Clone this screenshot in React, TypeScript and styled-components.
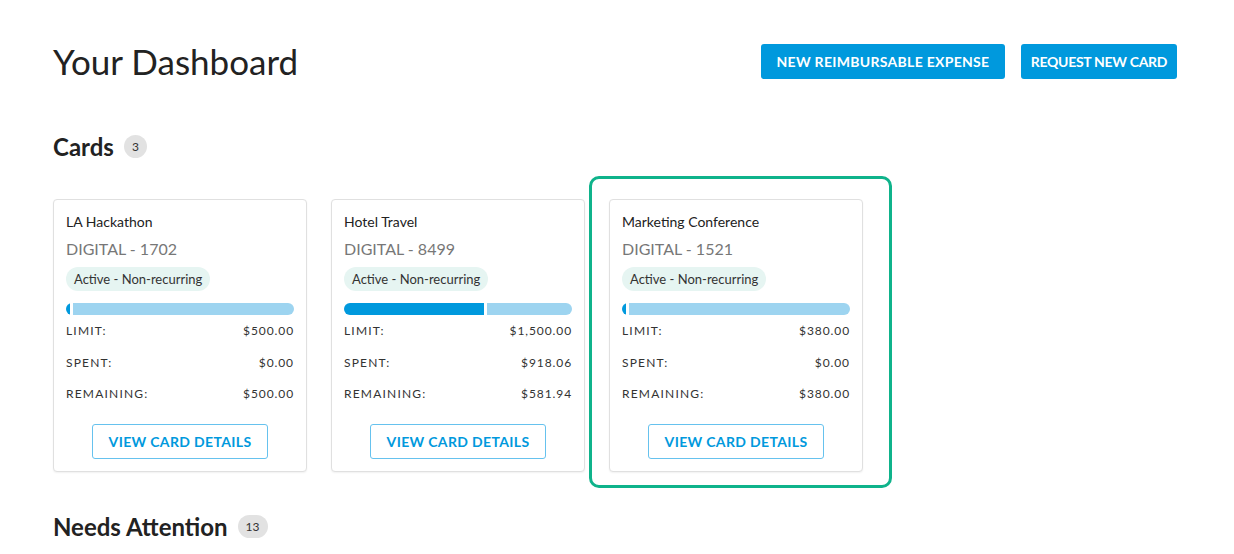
import React from 'react'
import styled, {createGlobalStyle} from 'styled-components'

type CardData = {
    name: string
    number: string
    limit: number
    spent: number
    highlighted?: boolean
}

const cards: CardData[] = [
    {name: 'LA Hackathon', number: '1702', limit: 500, spent: 0},
    {name: 'Hotel Travel', number: '8499', limit: 1500, spent: 918.06},
    {name: 'Marketing Conference', number: '1521', limit: 380, spent: 0, highlighted: true},
]

const money = (n: number) =>
    '$' + n.toLocaleString('en-US', {minimumFractionDigits: 2, maximumFractionDigits: 2})

export default function App() {
    return (
        <>
            <GlobalStyle/>
            <PageL>
                <HeaderL>
                    <TitleL>Your Dashboard</TitleL>
                    <ActionsL>
                        <PrimaryButtonL $width={244} $spacing={0.3}>New Reimbursable Expense</PrimaryButtonL>
                        <PrimaryButtonL $width={156} $spacing={-0.3}>Request New Card</PrimaryButtonL>
                    </ActionsL>
                </HeaderL>

                <SectionTitleL>
                    Cards <CountL>3</CountL>
                </SectionTitleL>

                <CardsRowL>
                    {cards.map(card => {
                        const pct = card.spent / card.limit
                        return (
                            <CardWrapL key={card.number}>
                                <CardL>
                                    <CardNameL>{card.name}</CardNameL>
                                    <CardNumberL>DIGITAL - {card.number}</CardNumberL>
                                    <div>
                                        <StatusL>Active - Non-recurring</StatusL>
                                    </div>
                                    <BarL>
                                        <BarSpentL style={{flexBasis: `max(4px, ${pct * 100}%)`}}/>
                                        <BarLeftL/>
                                    </BarL>
                                    <StatsL>
                                        <StatRowL><span>Limit:</span><span>{money(card.limit)}</span></StatRowL>
                                        <StatRowL><span>Spent:</span><span>{money(card.spent)}</span></StatRowL>
                                        <StatRowL><span>Remaining:</span><span>{money(card.limit - card.spent)}</span></StatRowL>
                                    </StatsL>
                                    <CardFooterL>
                                        <OutlineButtonL>View Card Details</OutlineButtonL>
                                    </CardFooterL>
                                </CardL>
                                {card.highlighted && <HighlightL/>}
                            </CardWrapL>
                        )
                    })}
                </CardsRowL>

                <SectionTitleL $attention>
                    Needs Attention <CountL $wide>13</CountL>
                </SectionTitleL>
            </PageL>
        </>
    )
}

// Styles
const GlobalStyle = createGlobalStyle`
  html, body {
    margin: 0;
    padding: 0;
    background: #fff;
  }
  body {
    font-family: Lato, "Open Sans", "Liberation Sans", sans-serif;
    color: #222;
    overflow: hidden;
  }
  * {
    box-sizing: border-box;
  }
`

const PageL = styled.div`
  padding: 44px 57px 0 53px;
`

const HeaderL = styled.header`
  display: flex;
  align-items: center;
  justify-content: space-between;
  height: 35px;
`

const TitleL = styled.h1`
  margin: 0;
  font-size: 35px;
  font-weight: 400;
  line-height: 1;
  color: #222;
`

const ActionsL = styled.div`
  display: flex;
  gap: 16px;
`

const PrimaryButtonL = styled.button<{ $width: number; $spacing: number }>`
  width: ${({$width}) => $width}px;
  height: 35px;
  padding: 0;
  border: none;
  border-radius: 3px;
  background: #0099dd;
  color: #fff;
  font-family: inherit;
  font-size: 14px;
  font-weight: 700;
  text-transform: uppercase;
  letter-spacing: ${({$spacing}) => $spacing}px;
  white-space: nowrap;
  cursor: pointer;
`

const SectionTitleL = styled.h2<{ $attention?: boolean }>`
  display: flex;
  align-items: center;
  gap: 10px;
  height: 24px;
  margin: ${({$attention}) => ($attention ? '43px 0 0' : '55px 0 0')};
  font-size: 24px;
  font-weight: 700;
  color: #222;
`

const CountL = styled.span<{ $wide?: boolean }>`
  display: inline-flex;
  align-items: center;
  justify-content: center;
  min-width: 23px;
  height: 23px;
  padding: ${({$wide}) => ($wide ? '0 8px' : '0')};
  border-radius: 12px;
  background: #e2e2e2;
  color: #333;
  font-size: 12px;
  font-weight: 400;
`

const CardsRowL = styled.div`
  display: flex;
  gap: 24px;
  margin-top: 41px;
`

const CardWrapL = styled.div`
  position: relative;
  width: 254px;
`

const CardL = styled.div`
  display: flex;
  flex-direction: column;
  padding: 13px 12px 12px 12px;
  border: 1px solid #e0e0e0;
  border-radius: 4px;
  background: #fff;
  box-shadow: 0 1px 2px rgba(0, 0, 0, 0.06);
`

const HighlightL = styled.div`
  position: absolute;
  top: -23px;
  left: -20px;
  right: -29px;
  bottom: -16px;
  border: 3px solid #0fb38b;
  border-radius: 10px;
  pointer-events: none;
`

const CardNameL = styled.div`
  font-size: 14px;
  line-height: 17px;
  color: #222;
`

const CardNumberL = styled.div`
  margin-top: 9px;
  font-size: 16px;
  line-height: 20px;
  color: #777;
`

const StatusL = styled.span`
  display: inline-flex;
  align-items: center;
  height: 24px;
  margin-top: 8px;
  padding: 0 8px;
  border-radius: 12px;
  background: #e6f5f2;
  color: #333;
  font-size: 13px;
`

const BarL = styled.div`
  display: flex;
  gap: 3px;
  height: 12px;
  margin-top: 12px;
  border-radius: 6px;
  overflow: hidden;
`

const BarSpentL = styled.div`
  flex: 0 0 auto;
  background: #0099dd;
`

const BarLeftL = styled.div`
  flex: 1 1 auto;
  background: #9dd4f0;
`

const StatsL = styled.div`
  display: flex;
  flex-direction: column;
`

const StatRowL = styled.div`
  display: flex;
  align-items: center;
  justify-content: space-between;
  height: 31.5px;
  font-size: 12px;
  letter-spacing: 1.2px;
  color: #333;
  text-transform: uppercase;

  span:last-child {
    letter-spacing: 0.9px;
  }
`

const CardFooterL = styled.div`
  display: flex;
  justify-content: center;
  margin-top: 14px;
`

const OutlineButtonL = styled.button`
  height: 35px;
  padding: 0 16px;
  border: 1px solid #66c2ee;
  border-radius: 3px;
  background: #fff;
  color: #0099dd;
  font-family: inherit;
  font-size: 14px;
  font-weight: 700;
  letter-spacing: 0.35px;
  text-transform: uppercase;
  cursor: pointer;
`
